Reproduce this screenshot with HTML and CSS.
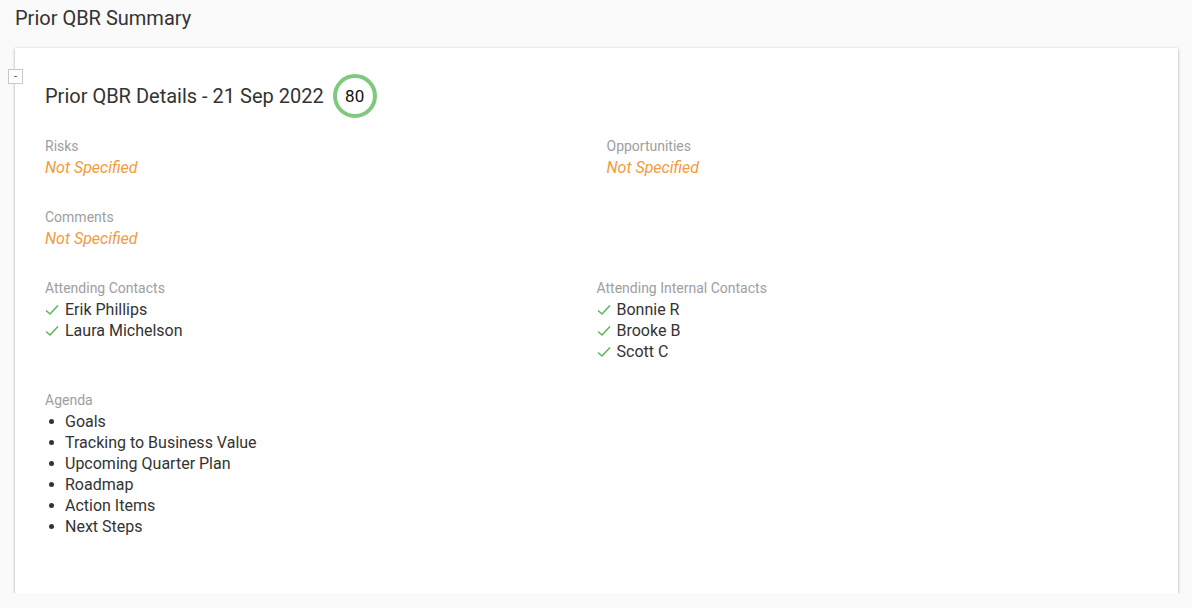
FILE: index.html
```html
<!DOCTYPE html>
<html>
<head>
<meta charset="utf-8">
<link rel="stylesheet" href="styles.css">
</head>
<body>
<div class="page">
  <h1 class="page-title">Prior QBR Summary</h1>
  <div class="card">
    <button class="collapse">-</button>
    <div class="heading">
      <span class="heading-text">Prior QBR Details - 21 Sep 2022</span>
      <span class="score">80</span>
    </div>
    <div class="row">
      <div class="col">
        <div class="label">Risks</div>
        <div class="empty">Not Specified</div>
      </div>
      <div class="col col-shift">
        <div class="label">Opportunities</div>
        <div class="empty">Not Specified</div>
      </div>
    </div>
    <div class="row">
      <div class="col">
        <div class="label">Comments</div>
        <div class="empty">Not Specified</div>
      </div>
    </div>
    <div class="row row-tight">
      <div class="col">
        <div class="label">Attending Contacts</div>
        <ul class="checks">
          <li><svg class="check" viewBox="0 0 14 12" width="14" height="12"><path d="M1 6.5 L5 10 L13 1.5" fill="none" stroke="#5cb85c" stroke-width="1.6"/></svg>Erik Phillips</li>
          <li><svg class="check" viewBox="0 0 14 12" width="14" height="12"><path d="M1 6.5 L5 10 L13 1.5" fill="none" stroke="#5cb85c" stroke-width="1.6"/></svg>Laura Michelson</li>
        </ul>
      </div>
      <div class="col">
        <div class="label">Attending Internal Contacts</div>
        <ul class="checks">
          <li><svg class="check" viewBox="0 0 14 12" width="14" height="12"><path d="M1 6.5 L5 10 L13 1.5" fill="none" stroke="#5cb85c" stroke-width="1.6"/></svg>Bonnie R</li>
          <li><svg class="check" viewBox="0 0 14 12" width="14" height="12"><path d="M1 6.5 L5 10 L13 1.5" fill="none" stroke="#5cb85c" stroke-width="1.6"/></svg>Brooke B</li>
          <li><svg class="check" viewBox="0 0 14 12" width="14" height="12"><path d="M1 6.5 L5 10 L13 1.5" fill="none" stroke="#5cb85c" stroke-width="1.6"/></svg>Scott C</li>
        </ul>
      </div>
    </div>
    <div class="row">
      <div class="col">
        <div class="label">Agenda</div>
        <ul class="bullets">
          <li>Goals</li>
          <li>Tracking to Business Value</li>
          <li>Upcoming Quarter Plan</li>
          <li>Roadmap</li>
          <li>Action Items</li>
          <li>Next Steps</li>
        </ul>
      </div>
    </div>
  </div>
</div>
</body>
</html>
```
FILE: styles.css
```css
* { box-sizing: border-box; }
html, body {
  margin: 0;
  padding: 0;
  background: #fafafa;
  font-family: Roboto, "Liberation Sans", sans-serif;
  color: #212121;
}
.page {
  padding: 7px 14px 0 15px;
}
.page-title {
  margin: 0;
  font-size: 20px;
  font-weight: 400;
  line-height: 22px;
  color: #333;
}
.card {
  position: relative;
  margin-top: 19px;
  background: #fff;
  box-shadow: 0 1px 3px rgba(0,0,0,0.3), 0 1px 1px rgba(0,0,0,0.1);
  padding: 26px 30px 0 30px;
  height: 545px;
}
.collapse {
  position: absolute;
  left: -7px;
  top: 21px;
  width: 15px;
  height: 15px;
  padding: 0;
  border: 1px solid #c8c8c8;
  background: #fff;
  color: #444;
  font-family: Roboto, "Liberation Sans", sans-serif;
  font-size: 11px;
  line-height: 11px;
}
.heading {
  display: flex;
  align-items: center;
  gap: 9px;
  height: 44px;
  margin-bottom: 18px;
}
.heading-text {
  font-size: 20px;
  color: #333;
}
.score {
  width: 44px;
  height: 44px;
  border: 4px solid #7fc97f;
  border-radius: 50%;
  display: flex;
  align-items: center;
  justify-content: center;
  font-size: 17px;
  color: #111;
}
.row {
  display: grid;
  grid-template-columns: 1fr 1fr;
  margin-bottom: 29px;
}
.row-tight {
  margin-bottom: 28px;
}
.col-shift {
  padding-left: 10px;
}
.label {
  font-size: 14px;
  line-height: 21px;
  color: #9e9e9e;
}
.empty {
  font-size: 16px;
  line-height: 21px;
  font-style: italic;
  color: #f59a3c;
}
ul {
  margin: 0;
  padding: 0;
  list-style: none;
}
.checks li, .bullets li {
  font-size: 16px;
  line-height: 21px;
  display: flex;
  align-items: center;
  color: #333;
}
.check {
  margin-right: 6px;
  flex: none;
}
.bullets li::before {
  content: "";
  width: 5px;
  height: 5px;
  border-radius: 50%;
  background: #333;
  margin: 0 11px 0 4px;
  flex: none;
}
```
